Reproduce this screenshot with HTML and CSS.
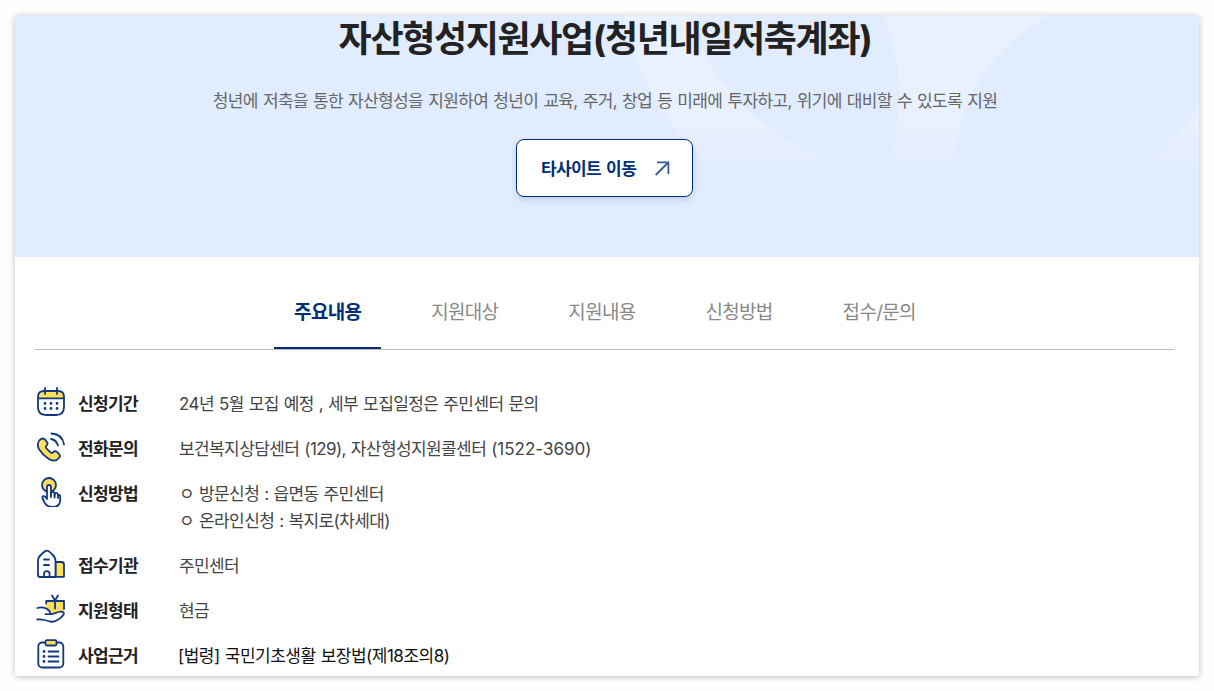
FILE: index.html
```
<!DOCTYPE html>
<html lang="ko">
<head>
  <meta charset="UTF-8">
  <meta name="viewport" content="width=device-width, initial-scale=1.0">
  <title>자산형성지원사업(청년내일저축계좌)</title>
  <link rel="stylesheet" href="styles.css">
</head>
<body>
  <div class="card">
    <div class="hero">
      <svg class="hero-bg" width="1184" height="242" viewBox="0 0 1184 242">
        <defs>
          <linearGradient id="fade" gradientUnits="userSpaceOnUse" x1="0" y1="108" x2="0" y2="156">
            <stop offset="0" stop-color="#e9f1ff"/>
            <stop offset="1" stop-color="#e1ecff"/>
          </linearGradient>
        </defs>
        <g fill="url(#fade)">
          <path d="M609 0C617 45 645 112 705 157L845 157C755 130 695 75 675 0Z"/>
          <path d="M868 0C887 45 891 95 871 157H939C942 85 975 32 1035 0H940L936 5L933 0Z"/>
          <path d="M1184 91C1168 115 1145 137 1115 157H1184Z"/>
        </g>
      </svg>
      <h1>자산형성지원사업(청년내일저축계좌)</h1>
      <p class="hero-text">청년에 저축을 통한 자산형성을 지원하여 청년이 교육, 주거, 창업 등 미래에 투자하고, 위기에 대비할 수 있도록 지원</p>
      <a href="#" class="site-btn"><span>타사이트 이동</span>
        <svg width="16" height="16" viewBox="0 0 16 16" fill="none" stroke="#365a96" stroke-width="1.8"><path d="M1.7 15L14.2 2.5M3 2.3H14.4V14"/></svg>
      </a>
    </div>

    <div class="tabs">
      <a href="#" class="tab active">주요내용</a>
      <a href="#" class="tab">지원대상</a>
      <a href="#" class="tab">지원내용</a>
      <a href="#" class="tab">신청방법</a>
      <a href="#" class="tab">접수/문의</a>
    </div>

    <ul class="info">
      <li>
        <svg class="icon" viewBox="0 0 30 30">
          <path class="fill" d="M2 11V9Q2 4 7 4H23Q28 4 28 9V11Z"/>
          <path d="M8 4H22Q28 4 28 10V20Q28 28 20 28H10Q2 28 2 20V10Q2 4 8 4ZM2 11.4H28M9 1V7M21 1V7"/>
          <path class="dots" d="M9 16.5h.01M15 16.5h.01M21 16.5h.01M9 21.5h.01M15 21.5h.01M21 21.5h.01"/>
        </svg>
        <strong>신청기간</strong>
        <p>24년 5월 모집 예정 , 세부 모집일정은 주민센터 문의</p>
      </li>
      <li>
        <svg class="icon" viewBox="0 0 30 30">
          <path class="fill line" d="M3.2 8.7L4.7 7.2Q6.8 5.6 8.8 7.4L11 10Q12.3 12 10.4 13.8Q9.3 15 10.4 16.4L14.5 20.4Q15.9 21.4 17 20.3Q18.9 18.5 20.8 19.9L23 22Q24.8 24 23 25.9L21.3 27.4Q17.5 30 12.5 26.7Q6.5 22.8 2.9 17Q.5 12 3.2 8.7Z"/>
          <path d="M15 7Q20.5 8 22 13.5M15.5 1.5Q26.5 2.2 28 12.5"/>
        </svg>
        <strong>전화문의</strong>
        <p>보건복지상담센터 (129), 자산형성지원콜센터 <span class="tel">(1522-3690)</span></p>
      </li>
      <li>
        <svg class="icon" viewBox="0 0 30 30">
          <circle class="fill line" cx="13" cy="8" r="7"/>
          <path class="hand" d="M11 21V10.2Q11 8 13 8T15 10.2V17V16Q15.4 14.6 17 14.8T18.6 16.5V18V17Q19 15.7 20.4 15.9T22 17.6V19Q22.4 17.6 23.4 18T24.2 19.5V23Q24 30 17 30Q11 30 8.8 26L6.6 21.5Q6 19.7 7.4 19.2T9.5 20.1L11 22Z"/>
          <path d="M15 16V20M18.6 17V20.5M22 18V21"/>
        </svg>
        <strong>신청방법</strong>
        <p>ㅇ 방문신청 : 읍면동 주민센터<br>ㅇ 온라인신청 : 복지로(차세대)</p>
      </li>
      <li>
        <svg class="icon" viewBox="0 0 30 30">
          <path class="fill line" d="M19.5 13H25.5Q28 13 28 15.5V27.8H19.5Z"/>
          <path class="white" d="M4 28Q2 28 2 26V12Q2 8 5.5 5.2L9 2.2Q10.8 1 12.6 2.2L16 5.2Q19.5 8 19.5 12V28ZM8 10.5H13M8 16H13M8 28V25Q8 22.2 10.8 22.2T13.6 25V28"/>
        </svg>
        <strong>접수기관</strong>
        <p>주민센터</p>
      </li>
      <li>
        <svg class="icon" viewBox="0 0 30 30">
          <path class="fill" d="M10 7H27.5V18L22 18L16 20L10 14Z"/>
          <path d="M10.2 9.5V7H28V15M19 7V14.5M19 6.5L16 1.5M19 6.5L22 1.5"/>
          <path class="white-fill" d="M1.3 14Q8.5 11.8 13.3 16.8Q15.6 20 12 20.2H16L22.3 18Q28 16.8 27.6 20Q23.5 28 15.7 28L1.3 25.5Z"/>
          <path d="M1.3 14Q8.5 11.8 13.3 16.8Q15.6 20 12 20.2H9.5H15.5Q17 20.2 18.5 19.3L22.3 18Q28.5 16.5 27.8 20.2Q26 23.5 21 26.3Q17.5 28.3 14 27.5L8.5 26Q4.5 25 1.3 25.5"/>
        </svg>
        <strong>지원형태</strong>
        <p>현금</p>
      </li>
      <li>
        <svg class="icon" viewBox="0 0 30 30">
          <rect x="2.3" y="3.5" width="25" height="25" rx="4"/>
          <rect class="fill line" x="9.5" y="1.2" width="11" height="5.3" rx="1.5"/>
          <path d="M12.5 12.5H22.5M12.5 17.5H22.5M12.5 22.5H22.5"/>
          <path class="dots" d="M8 12.5h.01M8 17.5h.01M8 22.5h.01"/>
        </svg>
        <strong>사업근거</strong>
        <p class="law">[법령] 국민기초생활 보장법(제18조의8)</p>
      </li>
    </ul>
  </div>
</body>
</html>
```
FILE: styles.css
```
* {
  margin: 0;
  padding: 0;
  box-sizing: border-box;
}

body {
  font-family: Inter, 'Noto Sans CJK KR', sans-serif;
  background: #fefefe;
  padding: 15px;
  height: 691px;
  overflow: hidden;
}

a {
  text-decoration: none;
}

.card {
  width: 1184px;
  height: 661px;
  background: #fff;
  border-radius: 3px;
  overflow: hidden;
  box-shadow: 0 1px 6px rgba(0, 0, 0, 0.25);
}

.hero {
  position: relative;
  display: flex;
  flex-direction: column;
  align-items: center;
  height: 242px;
  padding-right: 4px;
  background: #e1ecff;
}

.hero-bg {
  position: absolute;
  top: 0;
  left: 0;
}

.hero h1, .hero-text, .site-btn {
  position: relative;
  white-space: nowrap;
}

.hero h1 {
  font-size: 36px;
  line-height: 49px;
  font-weight: 700;
  letter-spacing: -1.35px;
  color: #222;
}

.hero-text {
  margin-top: 24px;
  font-size: 17px;
  line-height: 27px;
  letter-spacing: -0.65px;
  word-spacing: 1px;
  color: #666;
}

.site-btn {
  display: flex;
  align-items: center;
  justify-content: space-between;
  width: 177px;
  height: 58px;
  margin-top: 24px;
  margin-right: 1px;
  padding: 0 22px 0 24px;
  background: #fff;
  border: 1px solid #002f75;
  border-radius: 8px;
  box-shadow: 0 3px 6px rgba(0, 30, 90, 0.14);
  color: #002f75;
  font-size: 17px;
  font-weight: 700;
  letter-spacing: -0.6px;
  word-spacing: 1.5px;
}

.site-btn span {
  padding-bottom: 2px;
}

.tabs {
  display: flex;
  justify-content: center;
  gap: 30px;
  height: 93px;
  margin: 0 24px 0 20px;
  padding-top: 18px;
  border-bottom: 1px solid #bbb;
}

.tab {
  padding: 1px 20px 0;
  line-height: 73px;
  font-size: 19px;
  letter-spacing: -0.7px;
  color: #888;
}

.tab.active {
  color: #002f75;
  font-weight: 700;
  border-bottom: 2px solid #002f75;
}

.info {
  list-style: none;
  display: flex;
  flex-direction: column;
  gap: 18px;
  padding: 41px 21px 0;
}

.info li {
  display: grid;
  grid-template-columns: 42px 101px 1fr;
  align-items: start;
  font-size: 17px;
  line-height: 27px;
}

.info strong {
  letter-spacing: -0.6px;
  color: #222;
}

.info p {
  letter-spacing: -0.6px;
  word-spacing: 0.8px;
  color: #444;
}

.info .tel {
  letter-spacing: 0;
}

.info p.law {
  margin-left: -1px;
  letter-spacing: -0.5px;
  color: #111;
}

.icon {
  width: 30px;
  height: 30px;
  margin: -4px 0 -2px;
  fill: none;
  stroke: #12397d;
  stroke-width: 1.8;
  stroke-linecap: round;
  stroke-linejoin: round;
}

.icon .fill {
  fill: #ffde59;
  stroke: none;
}

.icon .line {
  stroke: #12397d;
}

.icon .dots {
  stroke-width: 2.8;
}

.icon .hand, .icon .white {
  fill: #fff;
}

.icon .white-fill {
  fill: #fff;
  stroke: none;
}
```
